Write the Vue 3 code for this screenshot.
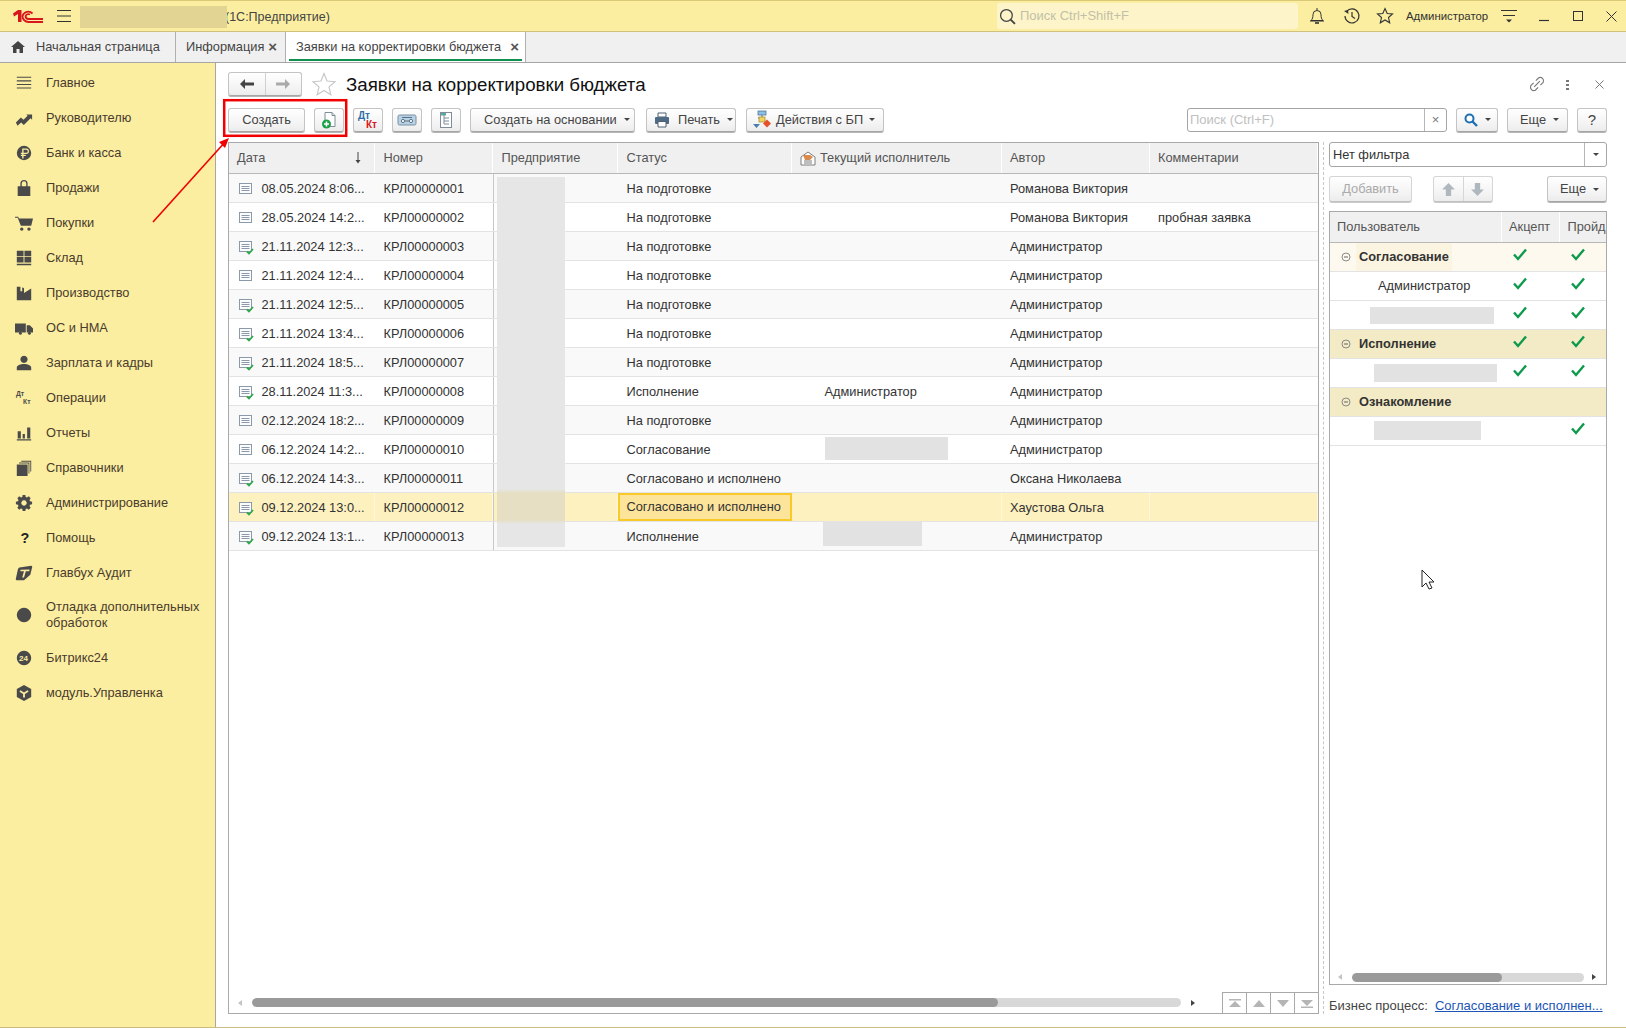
<template>
  <div class="app">
    <header class="top">
      <svg class="logo" viewBox="0 0 30 14" width="30" height="14">
        <path d="M0 4.5 5 1h3.500v12H5V5L1 7.5z" fill="#d8161c" />
        <path d="M19.5 4.5A6 6 0 0 0 9.5 7a6 6 0 0 0 6 6H30" fill="none" stroke="#d8161c" stroke-width="1.8" />
        <path d="M17 5.6A3 3 0 0 0 12.6 7a3 3 0 0 0 3 3H30" fill="none" stroke="#d8161c" stroke-width="1.8" />
      </svg>
      <svg class="burger" viewBox="0 0 14 12" width="14" height="12">
        <path d="M0 .5h14M0 6h14M0 11.5h14" stroke="#333" stroke-width="1" />
      </svg>
      <div class="app-title">(1С:Предприятие)</div>
      <div class="global-search">
        <svg viewBox="0 0 16 16" width="17" height="17">
          <circle cx="7" cy="7" r="5.5" fill="none" stroke="#444" stroke-width="1.2" />
          <path d="M11 11l4 4" stroke="#444" stroke-width="1.8" />
        </svg>
        <span>Поиск Ctrl+Shift+F</span>
      </div>
      <svg class="ti ti-bell" viewBox="0 0 16 18" width="16" height="18">
        <path d="M2 13.5c1.5-1.500 2-3 2-6a4 4 0 0 1 8 0c0 3 .5 4.500 2 6zM1 14h14M8 1v2" fill="none" stroke="#333" stroke-width="1" />
        <path d="M6 16h4" stroke="#333" stroke-width="1.6" />
      </svg>
      <svg class="ti ti-hist" viewBox="0 0 18 18" width="18" height="18">
        <path d="M3.6 4.5A7 7 0 1 1 2 9M9 5v4.500l3 2" fill="none" stroke="#333" stroke-width="1.2" />
        <path d="M1 4l4-1 .5 4z" fill="#333" />
      </svg>
      <svg class="ti ti-star" viewBox="0 0 18 18" width="18" height="18">
        <path d="M9 1.5l2.200 5 5.300.5-4 3.500 1.200 5.300L9 13l-4.700 2.800 1.200-5.300-4-3.500 5.300-.5z" fill="none" stroke="#333" stroke-width="1.1" />
      </svg>
      <span class="user-name">Администратор</span>
      <svg class="ti ti-lines" viewBox="0 0 16 14" width="16" height="14">
        <path d="M0 1.5h16M2 6.500h12" stroke="#333" stroke-width="1" />
        <path d="M5 10.5h6l-3 3z" fill="#333" />
      </svg>
      <svg class="ti ti-min" viewBox="0 0 10 12" width="10" height="12"><path d="M0 10.5h10" stroke="#333" stroke-width="1.2" /></svg>
      <svg class="ti ti-max" viewBox="0 0 10 10" width="10" height="10"><rect x=".5" y=".5" width="9" height="9" fill="none" stroke="#333" stroke-width="1" /></svg>
      <svg class="ti ti-close" viewBox="0 0 11 11" width="11" height="11"><path d="M.5.5l10 10M10.5.5l-10 10" stroke="#333" stroke-width="1" /></svg>
    </header>

    <nav class="tabs">
      <div class="tab tab-home">
        <svg viewBox="0 0 14 12" width="14" height="12"><path d="M7 0l7 6h-2v6H8.500V8h-3v4H2V6H0z" fill="#444" /></svg>
        <span>Начальная страница</span>
      </div>
      <div class="tab tab-info"><span>Информация</span><b class="tab-x">×</b></div>
      <div class="tab tab-active"><span>Заявки на корректировки бюджета</span><b class="tab-x">×</b></div>
    </nav>

    <div class="body">
      <aside class="sidebar">
        <div v-for="item in menu" :key="item.name" class="menu-item" :class="{ tall: item.tall }">
          <svg class="menu-icon" viewBox="0 0 20 20" width="18" height="18">
            <path v-if="item.d" :d="item.d" fill="#4a4a4a" fill-rule="evenodd" />
            <template v-if="item.name === 'Операции'">
              <text x="1" y="8" class="ic-text">Дт</text>
              <text x="9" y="17" class="ic-text">Кт</text>
            </template>
            <text v-if="item.name === 'Помощь'" x="6" y="16" class="ic-help">?</text>
            <text v-if="item.name === 'Битрикс24'" x="4.5" y="13" class="ic-24">24</text>
          </svg>
          <span>{{ item.name }}</span>
        </div>
      </aside>

      <main class="main">
        <div class="title-row">
          <div class="btn nav-btn">
            <span class="nav-half">
              <svg viewBox="0 0 14 10" width="14" height="10"><path d="M0 5l5-5v3.500h9v3H5V10z" fill="#444" /></svg>
            </span>
            <span class="nav-half">
              <svg viewBox="0 0 14 10" width="14" height="10"><path d="M14 5L9 0v3.500H0v3h9V10z" fill="#aaa" /></svg>
            </span>
          </div>
          <svg class="fav" viewBox="0 0 24 24" width="24" height="24">
            <path d="M12 1.5l3 7.500 8 .7-6 5.200 1.800 7.800L12 18.500l-6.800 4.200L7 14.900l-6-5.200 8-.7z" fill="#fff" stroke="#c8c8c8" stroke-width="1.2" />
          </svg>
          <h1>Заявки на корректировки бюджета</h1>
          <div class="title-tools">
            <svg viewBox="0 0 16 16" width="18" height="18">
              <path d="M5.500 10.500l5-5M7 5l2.500-2.500a3 3 0 0 1 4 4L11 9M9 11l-2.500 2.500a3 3 0 0 1-4-4L5 7" fill="none" stroke="#777" stroke-width="1" />
            </svg>
            <span class="dots"></span>
            <svg viewBox="0 0 9 9" width="9" height="9"><path d="M.5.5l8 8M8.500.5l-8 8" stroke="#777" stroke-width="1" /></svg>
          </div>
        </div>

        <div class="toolbar">
          <div class="btn btn-create">Создать</div>
          <div class="btn btn-ic btn-new">
            <svg viewBox="0 0 20 20" width="20" height="20">
              <path d="M6 2.500h7l3 3v11H6z" fill="#fff" stroke="#7f8c99" />
              <path d="M13 2.500v3h3" fill="#d7dee5" stroke="#7f8c99" />
              <circle cx="7.5" cy="14" r="4.500" fill="#1ea04a" />
              <path d="M5 14h5M7.500 11.500v5" stroke="#fff" stroke-width="1.5" />
            </svg>
          </div>
          <div class="btn btn-ic">
            <svg viewBox="0 0 24 20" width="24" height="20">
              <text x="2" y="9" class="dk dt">Дт</text>
              <text x="10" y="18" class="dk kt">Кт</text>
            </svg>
          </div>
          <div class="btn btn-ic">
            <svg viewBox="0 0 20 16" width="20" height="16">
              <rect x="1" y="3" width="18" height="10" rx="1.5" fill="#b5d2e8" stroke="#7b8e9e" />
              <circle cx="6" cy="9" r="1.6" fill="#fff" stroke="#60707f" />
              <circle cx="14" cy="9" r="1.6" fill="#fff" stroke="#60707f" />
              <path d="M8 9h4M5 5.500h10" stroke="#60707f" />
            </svg>
          </div>
          <div class="btn btn-ic">
            <svg viewBox="0 0 16 18" width="16" height="18">
              <rect x="2.5" y="1.5" width="11" height="15" fill="#fff" stroke="#7f8c99" />
              <rect x="3" y="2" width="5" height="2.5" fill="#58a89c" />
              <path d="M6 4v9M6 7h5M6 10h5M6 13h5" stroke="#7f8c99" />
            </svg>
          </div>
          <div class="btn btn-based">Создать на основании<i class="caret"></i></div>
          <div class="btn btn-print">
            <svg viewBox="0 0 16 16" width="16" height="16">
              <path d="M4 1h8v4H4z" fill="#fff" stroke="#4f6070" />
              <rect x="1" y="5" width="14" height="7" rx="1" fill="#4f6a85" />
              <path d="M4 9.500h8V15H4z" fill="#fff" stroke="#4f6070" />
            </svg>
            <span>Печать</span><i class="caret"></i>
          </div>
          <div class="btn btn-bp">
            <svg viewBox="0 0 20 20" width="20" height="20">
              <rect x="5" y="1" width="8" height="4" fill="#8cc0e6" stroke="#41688a" stroke-width=".7" />
              <path d="M9 5v3M5 8h7" stroke="#667" />
              <rect x="6" y="7" width="6" height="5" fill="#f2d35d" stroke="#9b8a32" stroke-width=".7" />
              <path d="M0 14h7l-3.500 4z" fill="#4a7cb0" />
              <path d="M14 9.500l4 4-4 4-4-4z" fill="#e5512a" />
            </svg>
            <span>Действия с БП</span><i class="caret"></i>
          </div>
          <div class="search">
            <span class="search-ph">Поиск (Ctrl+F)</span>
            <span class="search-x">×</span>
          </div>
          <div class="btn btn-find">
            <svg viewBox="0 0 14 14" width="14" height="14">
              <circle cx="5.5" cy="5.5" r="4" fill="#fff" stroke="#1f6fb2" stroke-width="2" />
              <path d="M8.500 8.500l4.500 4.500" stroke="#1f6fb2" stroke-width="2.4" />
            </svg>
            <i class="caret"></i>
          </div>
          <div class="btn btn-more">Еще<i class="caret"></i></div>
          <div class="btn btn-help">?</div>
        </div>

        <div class="content">
          <section class="grid">
            <div class="row head">
              <div class="cell cell-date"><span>Дата</span><svg viewBox="0 0 8 12" width="8" height="12"><path d="M4 0v9" stroke="#444" /><path d="M1.500 8h5L4 11.500z" fill="#444" /></svg></div>
              <div class="cell">Номер</div>
              <div class="cell">Предприятие</div>
              <div class="cell">Статус</div>
              <div class="cell cell-exec">
                <svg viewBox="0 0 16 16" width="16" height="16">
                  <path d="M1 7l7-5 7 5v8H1z" fill="#fff" stroke="#7d7d7d" />
                  <path d="M3 5h7l3 2-3 3H5z" fill="#d98a4e" />
                  <path d="M4 11h8M4 13h8" stroke="#7d7d7d" />
                </svg>
                <span>Текущий исполнитель</span>
              </div>
              <div class="cell">Автор</div>
              <div class="cell">Комментарии</div>
            </div>
            <div
              v-for="(r, i) in rows"
              :key="r.num"
              class="row line"
              :class="{ odd: i % 2 === 0, picked: r.picked }"
            >
              <div class="cell cell-doc">
                <svg viewBox="0 0 16 16" width="16" height="16">
                  <rect x="1.5" y="2.5" width="12" height="10" fill="#fbfcfd" stroke="#8b99a8" />
                  <path d="M3.500 5.500h8M3.500 7.500h8M3.500 9.500h8" stroke="#8b99a8" />
                  <path v-if="r.ok" d="M9 12.500l2 2 4-4.500" fill="none" stroke="#2fa84a" stroke-width="1.8" />
                </svg>
                <span>{{ r.date }}</span>
              </div>
              <div class="cell">{{ r.num }}</div>
              <div class="cell cell-org"></div>
              <div class="cell" :class="{ 'cell-focus': r.picked }">{{ r.status }}</div>
              <div class="cell cell-cur">{{ r.current }}</div>
              <div class="cell">{{ r.author }}</div>
              <div class="cell">{{ r.note }}</div>
            </div>
            <div class="grid-fill"></div>
            <div class="grid-foot">
              <div class="scroll scroll-main">
                <i class="arr-l"></i>
                <div class="track"><div class="thumb"></div></div>
                <i class="arr-r"></i>
              </div>
              <div class="pager">
                <span><svg viewBox="0 0 14 9" width="14" height="9"><path d="M1 0h12v1.500H1zM7 2l6 6H1z" fill="#b5b5b5" /></svg></span>
                <span><svg viewBox="0 0 14 9" width="14" height="9"><path d="M7 1l6 7H1z" fill="#b5b5b5" /></svg></span>
                <span><svg viewBox="0 0 14 9" width="14" height="9"><path d="M7 8L1 1h12z" fill="#b5b5b5" /></svg></span>
                <span><svg viewBox="0 0 14 9" width="14" height="9"><path d="M1 7.500h12V9H1zM7 7L1 1h12z" fill="#b5b5b5" /></svg></span>
              </div>
            </div>
          </section>

          <div class="splitter"></div>

          <section class="side">
            <div class="filter"><span>Нет фильтра</span><span class="filter-btn"><i class="caret"></i></span></div>
            <div class="side-tools">
              <div class="btn btn-add">Добавить</div>
              <div class="btn btn-arrows">
                <span><svg viewBox="0 0 14 14" width="15" height="15"><path d="M7 1l6 6H9.500v6h-5V7H1z" fill="#b0b8bf" /></svg></span>
                <span><svg viewBox="0 0 14 14" width="15" height="15"><path d="M7 13l6-6H9.500V1h-5v6H1z" fill="#b0b8bf" /></svg></span>
              </div>
              <div class="btn btn-more2">Еще<i class="caret"></i></div>
            </div>
            <div class="tree">
              <div class="tree-row tree-head">
                <div class="tc">Пользователь</div>
                <div class="tc">Акцепт</div>
                <div class="tc tc-clip">Пройд</div>
              </div>
              <div
                v-for="(u, i) in users"
                :key="i"
                class="tree-row"
                :class="{ group: u.group, first: i === 0 }"
              >
                <div class="tc tc-name" :class="{ indented: !u.group }">
                  <svg v-if="u.group" viewBox="0 0 10 10" width="10" height="10">
                    <circle cx="5" cy="5" r="4" fill="none" stroke="#8a8a8a" />
                    <path d="M3 5h4" stroke="#666" />
                  </svg>
                  <span>{{ u.name }}</span>
                </div>
                <div class="tc tc-check">
                  <svg v-if="u.a" viewBox="0 0 14 12" width="14" height="13"><path d="M1 6l4 4.500L13 1" fill="none" stroke="#0d9a4c" stroke-width="2.4" /></svg>
                </div>
                <div class="tc tc-check">
                  <svg v-if="u.b" viewBox="0 0 14 12" width="14" height="13"><path d="M1 6l4 4.500L13 1" fill="none" stroke="#0d9a4c" stroke-width="2.4" /></svg>
                </div>
              </div>
              <div class="tree-fill"></div>
              <div class="scroll scroll-side">
                <i class="arr-l"></i>
                <div class="track"><div class="thumb"></div></div>
                <i class="arr-r"></i>
              </div>
            </div>
            <div class="bp-line">
              <span>Бизнес процесс:</span>
              <a>Согласование и исполнен...</a>
            </div>
          </section>
        </div>
      </main>
    </div>

    <!-- замазанные области поверх содержимого -->
    <div class="blur b-title"></div>
    <div class="blur b-org"></div>
    <div class="blur b-r10"></div>
    <div class="blur b-r13"></div>
    <div class="blur b-u1"></div>
    <div class="blur b-u2"></div>
    <div class="blur b-u3"></div>

    <svg class="marks" viewBox="0 0 1626 1028" width="1626" height="1028">
      <rect x="224.2" y="100.2" width="122" height="35.6" fill="none" stroke="#f00000" stroke-width="2.5" />
      <path d="M153 222L226 141" stroke="#f00000" stroke-width="1.6" />
      <path d="M229 138l-10 4 6 6z" fill="#f00000" />
      <path d="M1422 570v17l4-4 3 6 3-1-3-6h5z" fill="#fff" stroke="#222" stroke-width="1" />
    </svg>
  </div>
</template>

<script setup>
const menu = [
  { name: 'Главное', d: 'M2 3h16v1.200H2zM2 7h16v1.200H2zM2 11h16v1.200H2zM2 15h16v1.200H2z' },
  { name: 'Руководителю', d: 'M1 15l5.500-5.500 3 2.500 4.500-4.500-1.500-1.500H19v6l-1.700-1.700-7.500 7.500-3-2.700-4 3.500z' },
  { name: 'Банк и касса', d: 'M10 2a8 8 0 1 0 0 16a8 8 0 0 0 0-16zM8 5h4.500a3 3 0 0 1 0 6H9.500v1H12v1.300H9.500V16H8v-2.700H6.500V12H8v-1H6.500V9.700H8zM9.500 6.300v3.400h3a1.700 1.700 0 0 0 0-3.400z' },
  { name: 'Продажи', d: 'M3 8h3V5a4 4 0 0 1 8 0v3h3v11H3zM7.500 8h5V5a2.500 2.500 0 0 0-5 0z' },
  { name: 'Покупки', d: 'M0 3h3.500l1 2H20l-2 8H6.500L3 4.300H0zM7.500 15a1.800 1.800 0 1 0 .01 0zM15.500 15a1.800 1.800 0 1 0 .01 0z' },
  { name: 'Склад', d: 'M2 2h7.500v6H2zM10.500 2H18v6h-7.500zM2 9h7.500v6H2zM10.500 9H18v6h-7.500zM2 16.500h16V18H2z' },
  { name: 'Производство', d: 'M2 18V3h4v5h2V4l2 .5V10l8-5v13z' },
  { name: 'ОС и НМА', d: 'M0 5h12v10H8a2.500 2.500 0 0 0-4 0H0zM13 7h3.500L20 10.500V15h-2a2.500 2.500 0 0 0-4 0h-1zM6 14a1.800 1.800 0 1 0 .01 0zM16 14a1.800 1.800 0 1 0 .01 0z' },
  { name: 'Зарплата и кадры', d: 'M10 2a4 4 0 1 0 .01 0zM2 18v-3c0-2.500 4-4 8-4s8 1.500 8 4v3z' },
  { name: 'Операции' },
  { name: 'Отчеты', d: 'M3 8h3.500v8H3zM8.500 11H11v5H8.500zM13.500 4H17v12h-3.500zM2 17h16v1.300H2z' },
  { name: 'Справочники', d: 'M2 6h12v13H2zM4.500 4H16v12h-1V5H4.500zM7 2h11v12h-1V3H7z' },
  { name: 'Администрирование', d: 'M8.500 1h3l.4 2.300 1.400.6 2-1.300 2.100 2.100-1.300 2 .6 1.400 2.300.4v3l-2.300.4-.6 1.400 1.300 2-2.100 2.100-2-1.300-1.400.6-.4 2.300h-3l-.4-2.300-1.400-.6-2 1.300-2.100-2.100 1.300-2-.6-1.400L1 11.500v-3l2.300-.4.6-1.400-1.300-2 2.100-2.100 2 1.300 1.400-.6zM10 7a3 3 0 1 0 .01 0z' },
  { name: 'Помощь' },
  { name: 'Главбух Аудит', d: 'M5 4l13-2c1 0 1.500 1 1 2l-2 8-7 6H3c-2 0-2.500-1-2-2l2-9c.2-1.500 1-2.700 2-3zM6 6.500v1.500h4l-2 7h2l2-7h4V6z' },
  { name: 'Отладка дополнительных обработок', tall: true, d: 'M10 2a8 8 0 1 0 .01 0z' },
  { name: 'Битрикс24', d: 'M10 2a8 8 0 1 0 .01 0z' },
  { name: 'модуль.Управленка', d: 'M10 1l8 4.500v9L10 19l-8-4.500v-9zM6 7l4 2.500L14 7l1 1.500-4 2.500v4H9v-4L5 8.500z' }
];

const rows = [
  { date: '08.05.2024 8:06...', num: 'КРЛ00000001', status: 'На подготовке', author: 'Романова Виктория' },
  { date: '28.05.2024 14:2...', num: 'КРЛ00000002', status: 'На подготовке', author: 'Романова Виктория', note: 'пробная заявка' },
  { date: '21.11.2024 12:3...', num: 'КРЛ00000003', status: 'На подготовке', author: 'Администратор', ok: true },
  { date: '21.11.2024 12:4...', num: 'КРЛ00000004', status: 'На подготовке', author: 'Администратор' },
  { date: '21.11.2024 12:5...', num: 'КРЛ00000005', status: 'На подготовке', author: 'Администратор', ok: true },
  { date: '21.11.2024 13:4...', num: 'КРЛ00000006', status: 'На подготовке', author: 'Администратор', ok: true },
  { date: '21.11.2024 18:5...', num: 'КРЛ00000007', status: 'На подготовке', author: 'Администратор', ok: true },
  { date: '28.11.2024 11:3...', num: 'КРЛ00000008', status: 'Исполнение', current: 'Администратор', author: 'Администратор', ok: true },
  { date: '02.12.2024 18:2...', num: 'КРЛ00000009', status: 'На подготовке', author: 'Администратор' },
  { date: '06.12.2024 14:2...', num: 'КРЛ00000010', status: 'Согласование', author: 'Администратор' },
  { date: '06.12.2024 14:3...', num: 'КРЛ00000011', status: 'Согласовано и исполнено', author: 'Оксана Николаева', ok: true },
  { date: '09.12.2024 13:0...', num: 'КРЛ00000012', status: 'Согласовано и исполнено', author: 'Хаустова Ольга', ok: true, picked: true },
  { date: '09.12.2024 13:1...', num: 'КРЛ00000013', status: 'Исполнение', author: 'Администратор', ok: true }
];

const users = [
  { name: 'Согласование', group: true, a: true, b: true },
  { name: 'Администратор', a: true, b: true },
  { name: '', a: true, b: true },
  { name: 'Исполнение', group: true, a: true, b: true },
  { name: '', a: true, b: true },
  { name: 'Ознакомление', group: true },
  { name: '', b: true }
];
</script>

<style>
html, body { margin: 0; overflow: hidden; }
</style>

<style scoped>
.app {
  position: relative;
  display: flex;
  flex-direction: column;
  width: 1626px;
  height: 1028px;
  overflow: hidden;
  background: #fff;
  color: #333;
  font: 12.8px/16px "Liberation Sans", Arial, sans-serif;
}

/* верхняя панель */
.top {
  display: flex;
  align-items: center;
  box-sizing: border-box;
  height: 32px;
  border-top: 1px solid #d9c976;
  border-bottom: 1px solid #cfc27e;
  background: #fbeea0;
}
.logo { margin-left: 13px; }
.burger { margin-left: 14px; }
.app-title {
  flex: none;
  box-sizing: border-box;
  width: 917px;
  margin-left: 9px;
  padding: 1px 0 0 145px;
  color: #444;
  font-size: 12.5px;
}
.global-search {
  display: flex;
  align-items: center;
  gap: 4px;
  box-sizing: border-box;
  width: 301px;
  height: 26px;
  padding-left: 2px;
  border-radius: 3px;
  background: #fdf5c9;
  color: #c2bfa8;
  font-size: 13px;
}
.ti { flex: none; }
.ti-bell { margin-left: 11px; }
.ti-hist { margin-left: 18px; }
.ti-star { margin-left: 15px; }
.user-name { margin-left: 12px; width: 83px; font-size: 11.4px; color: #333; white-space: nowrap; }
.ti-lines { margin-left: 12px; }
.ti-min { margin-left: 22px; }
.ti-max { margin-left: 24px; }
.ti-close { margin-left: 23px; }

/* вкладки */
.tabs {
  display: flex;
  box-sizing: border-box;
  height: 31px;
  border-bottom: 1px solid #a5a5a5;
  background: #f0f0f0;
}
.tab {
  display: flex;
  align-items: center;
  box-sizing: border-box;
  height: 30px;
  border-right: 1px solid #b0b0b0;
  color: #444;
}
.tab-home { width: 176px; padding-left: 11px; gap: 11px; }
.tab-info { width: 110px; padding-left: 10px; }
.tab-info .tab-x { margin-left: 4px; }
.tab-active {
  position: relative;
  width: 240px;
  padding-left: 10px;
  background: #fff;
}
.tab-active::after {
  content: "";
  position: absolute;
  left: 3px;
  right: 3px;
  bottom: 1px;
  height: 2px;
  background: #0f8f50;
}
.tab-x { margin-left: 9px; color: #555; font-size: 15px; }

/* левое меню */
.body { display: flex; flex: 1; min-height: 0; border-bottom: 1px solid #c9bc7c; }
.sidebar {
  box-sizing: border-box;
  width: 216px;
  padding-top: 2px;
  border-right: 1px solid #a8a8a0;
  background: #fbeea0;
}
.menu-item {
  display: flex;
  align-items: center;
  height: 35px;
  padding-left: 15px;
  color: #4a3b2d;
}
.menu-item span { margin-left: 13px; width: 170px; }
.menu-item.tall { height: 50px; }
.menu-icon { flex: none; }
.ic-text { font: bold 7.5px "Liberation Sans", sans-serif; fill: #4a4a4a; }
.ic-help { font: bold 16px "Liberation Sans", sans-serif; fill: #222; }
.ic-24 { font: bold 9px "Liberation Sans", sans-serif; fill: #fbeea0; }

/* форма */
.main { display: flex; flex: 1; flex-direction: column; min-width: 0; padding: 9px 19px 13px 12px; }
.title-row { display: flex; align-items: center; height: 24px; }
.btn {
  display: flex;
  align-items: center;
  justify-content: center;
  box-sizing: border-box;
  flex: none;
  border: 1px solid #c4c4c4;
  border-bottom-color: #a5a5a5;
  border-radius: 3px;
  background: linear-gradient(#fff, #f3f3f3 70%, #ececec);
  box-shadow: 0 1px 0 #b5b5b5;
  color: #444;
}
.nav-btn { width: 74px; height: 24px; }
.nav-half { display: flex; align-items: center; justify-content: center; flex: 1; height: 100%; }
.nav-half + .nav-half { border-left: 1px solid #d0d0d0; }
.fav { margin-left: 10px; }
h1 { margin: 0 0 0 10px; padding-top: 1px; color: #111; font-size: 18.7px; font-weight: 400; line-height: 24px; }
.title-tools { display: flex; align-items: center; margin-left: auto; margin-right: 3px; }
.title-tools svg:first-child { margin-right: 20px; }
.dots { width: 3px; height: 11px; margin-right: 26px; background: radial-gradient(circle, #777 1.3px, transparent 1.5px) 0 0 / 3px 4px; }

.toolbar { display: flex; align-items: center; height: 25px; margin-top: 11px; }
.toolbar .btn { height: 24px; }
.btn-create { width: 77px; }
.btn-ic { width: 30px; margin-left: 9px; }
.btn-based { justify-content: flex-start; width: 165px; margin-left: 9px; padding-left: 13px; }
.btn-print { justify-content: flex-start; width: 90px; margin-left: 11px; padding-left: 7px; gap: 8px; }
.btn-print .caret { margin-left: -1px; }
.btn-bp { justify-content: flex-start; width: 138px; margin-left: 10px; padding-left: 6px; gap: 3px; }
.btn-bp .caret { margin-left: 3px; }
.caret {
  display: inline-block;
  flex: none;
  width: 0;
  height: 0;
  margin-left: 7px;
  border: 3px solid transparent;
  border-top: 3px solid #444;
  border-bottom: 0;
}
.search {
  display: flex;
  align-items: center;
  box-sizing: border-box;
  width: 260px;
  height: 24px;
  margin-left: auto;
  border: 1px solid #a5a5a5;
  border-radius: 3px;
  background: #fff;
  font-size: 13px;
}
.search-ph { flex: 1; padding-left: 2px; color: #c0c0c0; }
.search-x { width: 21px; height: 100%; border-left: 1px solid #b5b5b5; color: #777; line-height: 21px; text-align: center; }
.btn-find { width: 42px; margin-left: 9px; }
.btn-more { justify-content: flex-start; width: 61px; margin-left: 9px; padding-left: 12px; }
.btn-help { width: 30px; margin-left: 9px; font-size: 15px; }

.content { display: flex; flex: 1; min-height: 0; margin-top: 10px; }

/* основная таблица */
.grid {
  display: flex;
  flex-direction: column;
  box-sizing: border-box;
  width: 1091px;
  border: 1px solid #a9a9a9;
}
.row {
  display: grid;
  grid-template-columns: 146px 118px 125px 173.5px 210px 148px 1fr;
  flex: none;
}
.head { height: 30px; border-bottom: 1px solid #b8b8b8; }
.head .cell { border-right: 1px solid #fff; background: #f0f0f0; color: #555; }
.cell {
  display: flex;
  align-items: center;
  box-sizing: border-box;
  min-width: 0;
  padding-left: 8.5px;
  white-space: nowrap;
}
.cell-date { justify-content: space-between; padding-left: 8px; padding-right: 12px; }
.cell-exec { gap: 4px; }
.line { height: 29px; border-bottom: 1px solid #e3e3e3; box-sizing: border-box; }
.line .cell { padding-top: 1px; }
.line.odd { background: #f9f9f9; }
.line.picked { background: #fdf1c0; }
.line.picked .cell { border-right: 1px solid #fff8de; }
.cell-doc { gap: 8px; }
.cell-org { border-left: 1px solid #c8c8c8; }
.cell-cur { padding-left: 33px !important; }
.line .cell-focus { border: 2px solid #f8c928; background: #fde49b; padding-left: 6.5px; padding-top: 0; }
.line.picked .cell-focus { border-right: 2px solid #f8c928; }
.grid-fill { flex: 1; }
.grid-foot { display: flex; align-items: stretch; height: 21px; }
.scroll { display: flex; align-items: center; }
.scroll-main { flex: 1; padding: 0 0 0 9px; }
.track { flex: 1; height: 9px; border-radius: 5px; background: #d8d8d8; overflow: hidden; }
.thumb { height: 100%; border-radius: 5px; background: #9a9a9a; }
.scroll-main .thumb { width: 80.3%; }
.scroll-side .thumb { width: 64.8%; }
.arr-l, .arr-r { display: block; width: 0; height: 0; border: 3.5px solid transparent; }
.arr-l { border-left: 0; border-right: 4px solid #c4c4c4; }
.arr-r { border-right: 0; border-left: 4px solid #444; }
.scroll-main .arr-l { margin-right: 10px; }
.scroll-main .arr-r { margin-left: 10px; margin-right: 27px; }
.pager { display: flex; }
.pager span {
  display: flex;
  align-items: center;
  justify-content: center;
  box-sizing: border-box;
  width: 24px;
  border-left: 1px solid #a9a9a9;
  border-top: 1px solid #a9a9a9;
}

.splitter { width: 5px; margin-left: 4px; border-left: 1px dashed #c8c8c8; }

/* правая панель */
.side { display: flex; flex-direction: column; flex: none; width: 278px; }
.filter {
  display: flex;
  align-items: center;
  justify-content: space-between;
  box-sizing: border-box;
  height: 25px;
  padding-left: 3px;
  border: 1px solid #a5a5a5;
  border-radius: 3px;
  color: #333;
}
.filter-btn { display: flex; align-items: center; justify-content: center; width: 21px; height: 100%; border-left: 1px solid #b5b5b5; }
.filter-btn .caret { margin-left: 0; }
.side-tools { display: flex; height: 26px; margin-top: 9px; }
.side-tools .btn { height: 26px; }
.btn-add { width: 83px; color: #aaa; }
.btn-arrows { width: 60px; margin-left: 21px; }
.btn-arrows span { display: flex; align-items: center; justify-content: center; flex: 1; height: 100%; }
.btn-arrows span + span { border-left: 1px solid #d6d6d6; }
.btn-add, .btn-arrows { border-color: #d5d5d5; border-bottom-color: #c0c0c0; box-shadow: 0 1px 0 #ccc; }
.btn-more2 { justify-content: flex-start; width: 60px; margin-left: auto; padding-left: 12px; }

.tree {
  display: flex;
  flex: 1;
  flex-direction: column;
  min-height: 0;
  margin-top: 9px;
  border: 1px solid #a9a9a9;
  overflow: hidden;
}
.tree-row {
  display: grid;
  grid-template-columns: 172px 57.5px 1fr;
  flex: none;
  box-sizing: border-box;
  height: 29px;
  border-bottom: 1px solid #e3e3e3;
}
.tree-head { height: 31px; border-bottom: 1px solid #b8b8b8; }
.tree-head .tc { border-right: 1px solid #fff; background: #f0f0f0; color: #555; }
.tc { display: flex; align-items: center; box-sizing: border-box; min-width: 0; padding-left: 7px; white-space: nowrap; }
.tc-clip { overflow: hidden; padding-left: 8px; border-right: 0 !important; }
.tc-name { gap: 8px; padding-left: 11px; }
.indented { padding-left: 48px; }
.tc-check { align-items: flex-start; padding: 5px 0 0 11px; }
.group { background: #f3ebc5; font-weight: 700; }
.group.first { background: #fdf9ee; }
.group.first .tc-name span { margin-left: -3px; padding: 6px 3px; background: #fbf4e0; }
.tree-fill { flex: 1; }
.scroll-side { flex: none; height: 14px; padding: 0 10px 0 8px; }
.scroll-side .arr-l { margin-right: 10px; }
.scroll-side .arr-r { margin-left: 8px; }
.bp-line {
  display: flex;
  flex: none;
  align-items: center;
  box-sizing: border-box;
  height: 29px;
  padding-top: 13px;
  gap: 7px;
  color: #444;
  font-size: 13px;
  white-space: nowrap;
}
.bp-line a { color: #1b55b5; text-decoration: underline; }

/* поверх страницы */
.blur { position: absolute; background: #e2e2e2; }
.b-title { left: 80px; top: 6px; width: 147px; height: 22px; background: #e2d594; }
.b-org {
  left: 497px;
  top: 177px;
  width: 68px;
  height: 370px;
  background: linear-gradient(#e6e6e6 0, #e6e6e6 312px, #e6dfc4 316px, #e6dfc4 343px, #e6e6e6 347px);
}
.b-r10 { left: 825px; top: 437px; width: 123px; height: 23px; }
.b-r13 { left: 823px; top: 522px; width: 99px; height: 24px; }
.b-u1 { left: 1370px; top: 307px; width: 124px; height: 17px; }
.b-u2 { left: 1374px; top: 364px; width: 123px; height: 18px; }
.b-u3 { left: 1374px; top: 421px; width: 107px; height: 19px; }
.marks { position: absolute; left: 0; top: 0; pointer-events: none; }
.dk { font: bold 10px "Liberation Sans", sans-serif; }
.dt { fill: #2f6ea5; }
.kt { fill: #d8161c; }
</style>
